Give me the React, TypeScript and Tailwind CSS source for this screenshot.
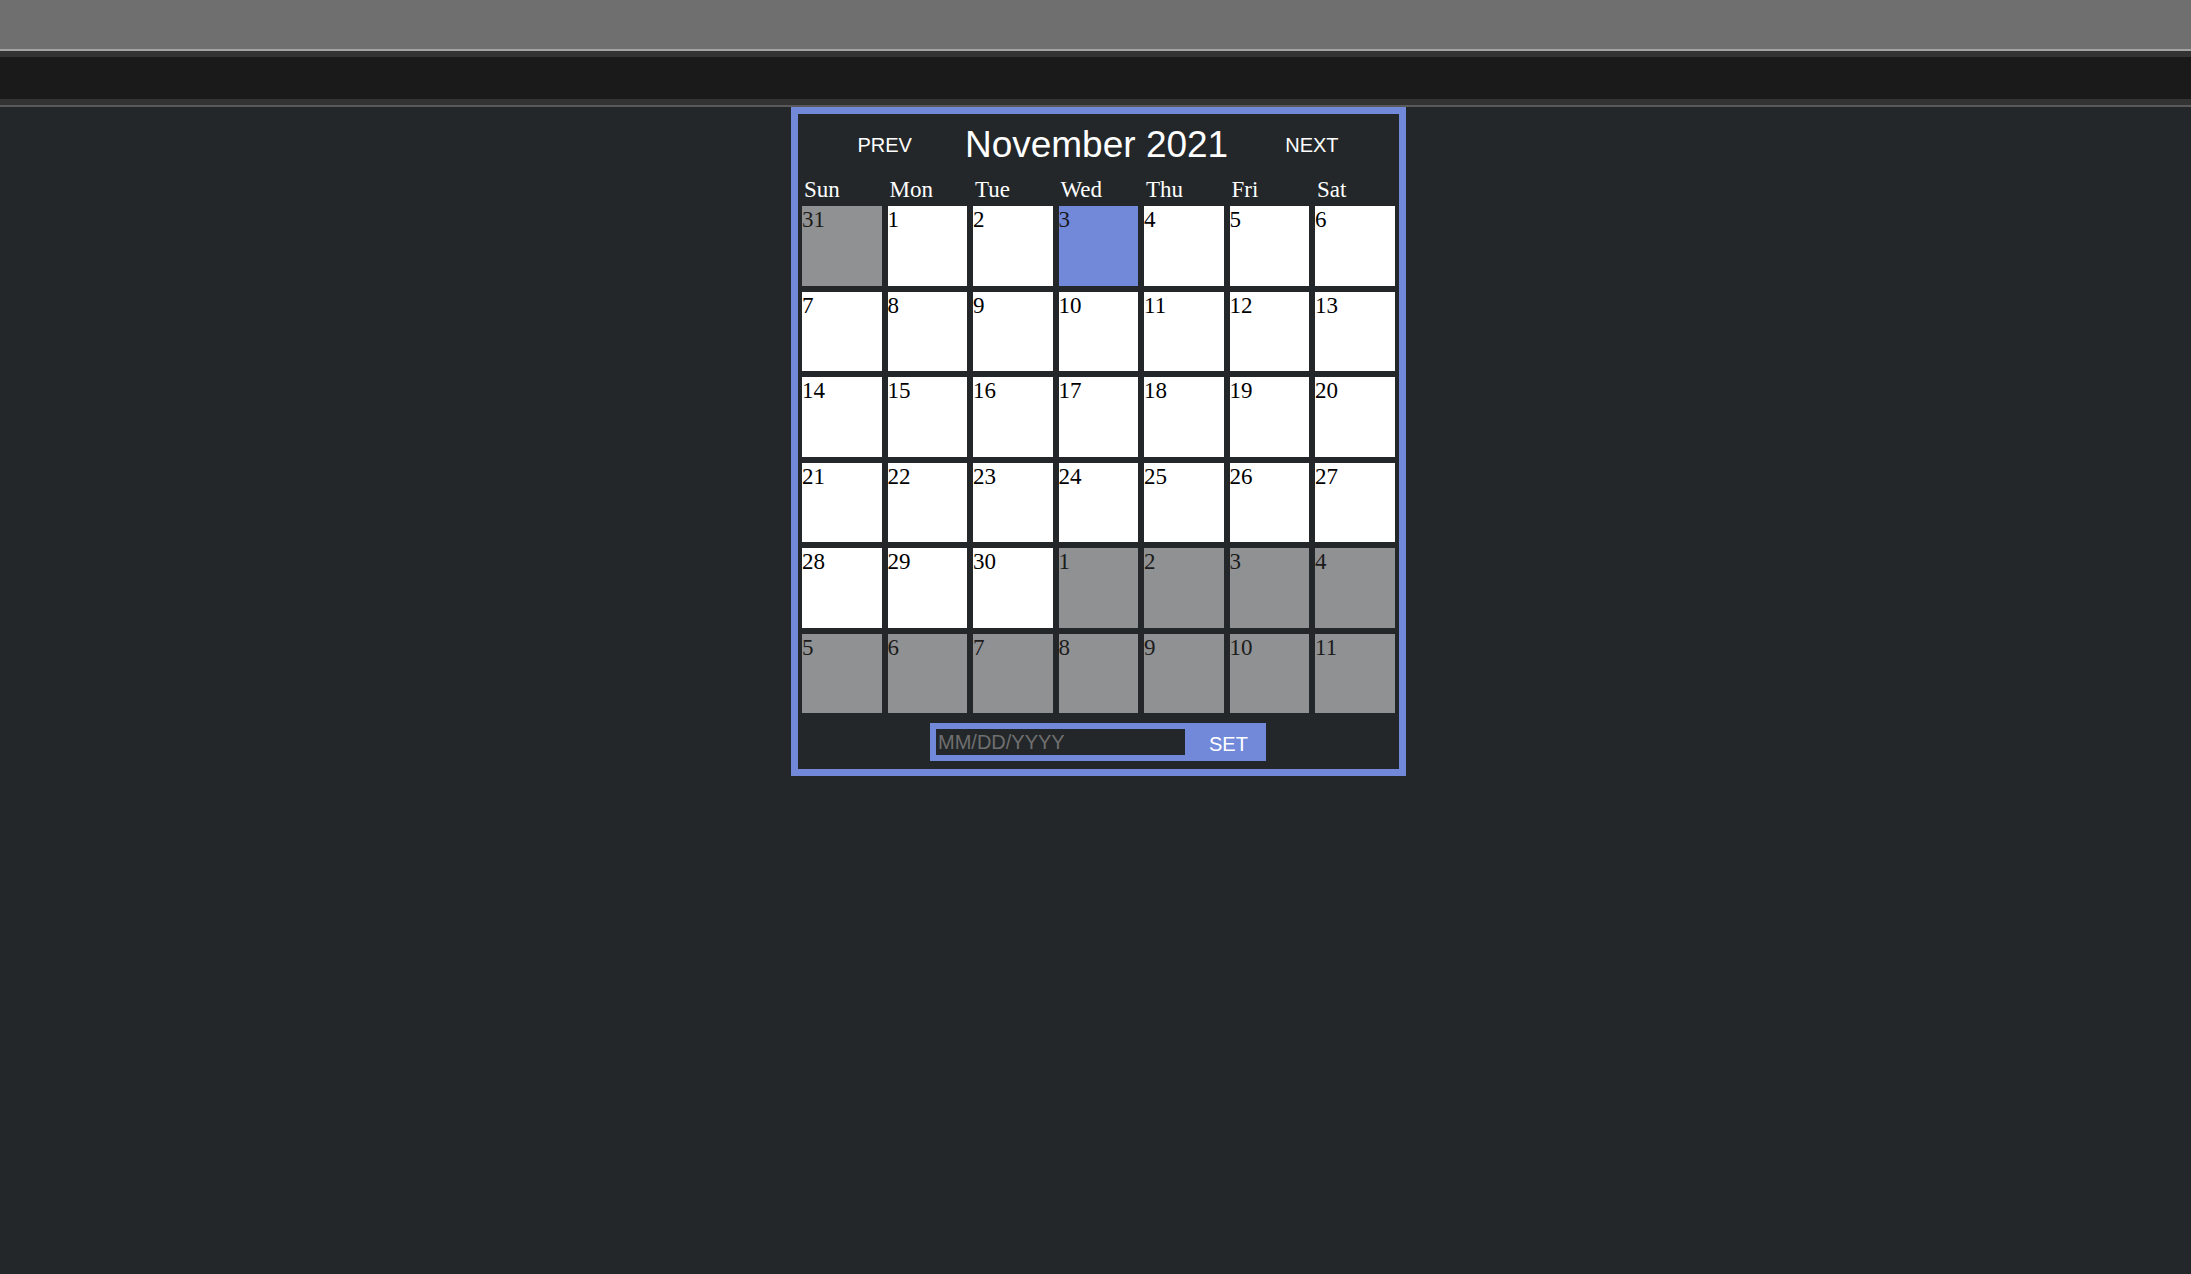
import { useState } from "react";

type Day = { n: number; muted?: boolean };

const WEEKDAYS = ["Sun", "Mon", "Tue", "Wed", "Thu", "Fri", "Sat"];

// November 2021, padded with the tail of October and the start of December
function buildDays(): Day[] {
  const days: Day[] = [{ n: 31, muted: true }];
  for (let i = 1; i <= 30; i++) days.push({ n: i });
  for (let i = 1; i <= 11; i++) days.push({ n: i, muted: true });
  return days;
}

export default function App() {
  const [date, setDate] = useState("");
  const days = buildDays();
  const today = 3;

  return (
    <div className="min-h-screen bg-[#23272a]">
      {/* browser-ish chrome bars */}
      <div className="h-[49px] bg-[#6f6f6f]" />
      <div className="h-[2px] bg-[#a3a3a3]" />
      <div className="h-[6px] bg-[#333333]" />
      <div className="h-[42px] bg-[#1a1a1a]" />
      <div className="h-[6px] bg-[#333333]" />
      <div className="h-[2px] bg-[#5a5a5a]" />

      <div className="flex justify-center pl-[6px]">
        <div className="w-[615px] border-[7px] border-[#7289da] pt-[9px] pb-[8px] pl-[4px] pr-[5px]">
          {/* Header */}
          <div className="flex h-[43px] items-center justify-center font-['Liberation_Sans',Arial,sans-serif] text-white">
            <button className="bg-transparent text-[20px] leading-normal text-white">PREV</button>
            <h1 className="ml-[53px] mr-[57px] text-[37px] leading-normal">November 2021</h1>
            <button className="bg-transparent text-[20px] leading-normal text-white">NEXT</button>
          </div>

          {/* Weekdays */}
          <div className="mt-[11px] grid h-[26px] grid-cols-[repeat(7,79.5px)] gap-x-[6px] font-['Liberation_Serif','Times_New_Roman',serif] text-[23px] leading-[26px] text-white">
            {WEEKDAYS.map((d) => (
              <div key={d} className="pl-[2px]">
                {d}
              </div>
            ))}
          </div>

          {/* Days */}
          <div className="mt-[3px] grid grid-cols-[repeat(7,79.5px)] auto-rows-[79.5px] gap-[6px] font-['Liberation_Serif','Times_New_Roman',serif] text-[23px] leading-[27px]">
            {days.map((d, i) => {
              const isToday = !d.muted && d.n === today;
              return (
                <div
                  key={i}
                  className={
                    isToday
                      ? "bg-[#7289da] text-[#1a1a1a]"
                      : d.muted
                        ? "bg-[#909193] text-[#1c1c1c]"
                        : "bg-white text-black"
                  }
                >
                  {d.n}
                </div>
              );
            })}
          </div>

          {/* Set date */}
          <div className="mt-[10px] flex justify-center">
            <form
              className="flex bg-[#7289da] p-[6px] font-['Liberation_Sans',Arial,sans-serif]"
              onSubmit={(e) => e.preventDefault()}
            >
              <input
                value={date}
                onChange={(e) => setDate(e.target.value)}
                placeholder="MM/DD/YYYY"
                className="h-[26px] w-[249px] bg-[#23272a] pl-[2px] text-[20px] text-white outline-none placeholder:text-[#6f6f6f]"
              />
              <button type="submit" className="h-[26px] w-[75px] bg-transparent pl-[24px] text-left text-[20px] text-white">
                SET
              </button>
            </form>
          </div>
        </div>
      </div>
    </div>
  );
}
